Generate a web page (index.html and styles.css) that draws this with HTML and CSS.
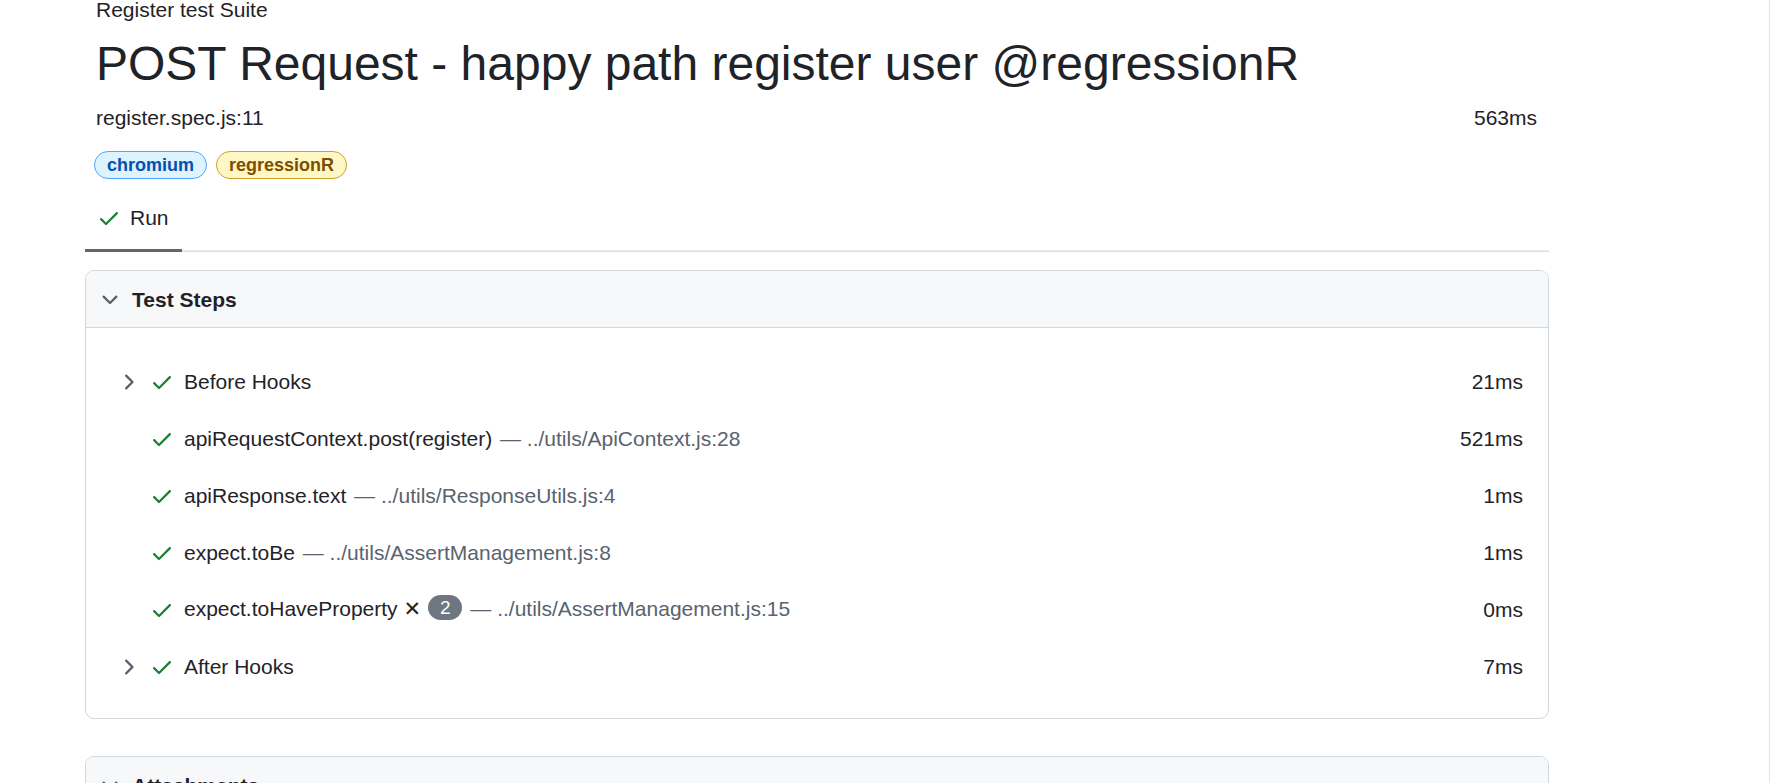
FILE: index.html
```html
<!DOCTYPE html>
<html>
<head>
<meta charset="utf-8">
<title>Test</title>
<link rel="stylesheet" href="styles.css">
</head>
<body>
<div class="page">
  <div class="test-case">
    <div class="suite">Register test Suite</div>
    <h1 class="title">POST Request - happy path register user @regressionR</h1>
    <div class="loc-row"><span>register.spec.js:11</span><span>563ms</span></div>
    <div class="labels">
      <span class="label blue">chromium</span>
      <span class="label yellow">regressionR</span>
    </div>
    <div class="tabs">
      <div class="tab selected">
        <svg class="icon ok" viewBox="0 0 16 16"><path d="M13.78 4.22a.75.75 0 0 1 0 1.06l-7.25 7.25a.75.75 0 0 1-1.06 0L2.22 9.28a.751.751 0 0 1 .018-1.042.751.751 0 0 1 1.042-.018L6 10.94l6.72-6.72a.75.75 0 0 1 1.060 0Z"/></svg>
        <span>Run</span>
      </div>
    </div>

    <section class="box">
      <div class="box-header">
        <svg class="icon chev" viewBox="0 0 16 16"><path d="M12.78 5.22a.749.749 0 0 1 0 1.06l-4.25 4.25a.749.749 0 0 1-1.06 0L3.22 6.28a.749.749 0 1 1 1.06-1.06L8 8.94l3.72-3.72a.749.749 0 0 1 1.06 0Z"/></svg>
        <span>Test Steps</span>
      </div>
      <div class="box-body">
        <div class="step">
          <svg class="icon chev" viewBox="0 0 16 16"><path d="M6.22 3.22a.75.75 0 0 1 1.06 0l4.25 4.25a.75.75 0 0 1 0 1.06l-4.25 4.25a.751.751 0 0 1-1.042-.018.751.751 0 0 1-.018-1.042L9.94 8 6.22 4.280a.75.75 0 0 1 0-1.06Z"/></svg>
          <svg class="icon ok" viewBox="0 0 16 16"><path d="M13.78 4.22a.75.75 0 0 1 0 1.06l-7.25 7.25a.75.75 0 0 1-1.06 0L2.22 9.28a.751.751 0 0 1 .018-1.042.751.751 0 0 1 1.042-.018L6 10.94l6.72-6.72a.75.75 0 0 1 1.06 0Z"/></svg>
          <span class="step-title">Before Hooks</span>
          <span class="dur">21ms</span>
        </div>
        <div class="step">
          <span class="icon-space"></span>
          <svg class="icon ok" viewBox="0 0 16 16"><path d="M13.78 4.22a.75.75 0 0 1 0 1.06l-7.25 7.25a.75.75 0 0 1-1.06 0L2.22 9.28a.751.751 0 0 1 .018-1.042.751.751 0 0 1 1.042-.018L6 10.94l6.72-6.72a.75.75 0 0 1 1.06 0Z"/></svg>
          <span class="step-title">apiRequestContext.post(register) <span class="path">— ../utils/ApiContext.js:28</span></span>
          <span class="dur">521ms</span>
        </div>
        <div class="step">
          <span class="icon-space"></span>
          <svg class="icon ok" viewBox="0 0 16 16"><path d="M13.78 4.22a.75.75 0 0 1 0 1.06l-7.25 7.25a.75.75 0 0 1-1.06 0L2.22 9.28a.751.751 0 0 1 .018-1.042.751.751 0 0 1 1.042-.018L6 10.94l6.72-6.72a.75.75 0 0 1 1.06 0Z"/></svg>
          <span class="step-title">apiResponse.text <span class="path">— ../utils/ResponseUtils.js:4</span></span>
          <span class="dur">1ms</span>
        </div>
        <div class="step">
          <span class="icon-space"></span>
          <svg class="icon ok" viewBox="0 0 16 16"><path d="M13.78 4.22a.75.75 0 0 1 0 1.06l-7.25 7.25a.75.75 0 0 1-1.06 0L2.22 9.28a.751.751 0 0 1 .018-1.042.751.751 0 0 1 1.042-.018L6 10.94l6.72-6.72a.75.75 0 0 1 1.06 0Z"/></svg>
          <span class="step-title">expect.toBe <span class="path">— ../utils/AssertManagement.js:8</span></span>
          <span class="dur">1ms</span>
        </div>
        <div class="step">
          <span class="icon-space"></span>
          <svg class="icon ok" viewBox="0 0 16 16"><path d="M13.78 4.22a.75.75 0 0 1 0 1.06l-7.25 7.25a.75.75 0 0 1-1.06 0L2.22 9.28a.751.751 0 0 1 .018-1.042.751.751 0 0 1 1.042-.018L6 10.94l6.72-6.72a.75.75 0 0 1 1.06 0Z"/></svg>
          <span class="step-title">expect.toHaveProperty <span class="times">✕</span> <span class="counter">2</span> <span class="path">— ../utils/AssertManagement.js:15</span></span>
          <span class="dur">0ms</span>
        </div>
        <div class="step">
          <svg class="icon chev" viewBox="0 0 16 16"><path d="M6.22 3.22a.75.75 0 0 1 1.06 0l4.25 4.25a.75.75 0 0 1 0 1.06l-4.25 4.25a.751.751 0 0 1-1.042-.018.751.751 0 0 1-.018-1.042L9.94 8 6.22 4.28a.75.75 0 0 1 0-1.06Z"/></svg>
          <svg class="icon ok" viewBox="0 0 16 16"><path d="M13.78 4.22a.75.75 0 0 1 0 1.06l-7.25 7.25a.75.75 0 0 1-1.06 0L2.22 9.28a.751.751 0 0 1 .018-1.042.751.751 0 0 1 1.042-.018L6 10.94l6.72-6.72a.75.75 0 0 1 1.06 0Z"/></svg>
          <span class="step-title">After Hooks</span>
          <span class="dur">7ms</span>
        </div>
      </div>
    </section>

    <section class="box attachments">
      <div class="box-header">
        <svg class="icon chev" viewBox="0 0 16 16"><path d="M12.78 5.22a.749.749 0 0 1 0 1.06l-4.25 4.25a.749.749 0 0 1-1.06 0L3.22 6.28a.749.749 0 1 1 1.06-1.06L8 8.94l3.72-3.72a.749.749 0 0 1 1.06 0Z"/></svg>
        <span>Attachments</span>
      </div>
      <div class="box-body"></div>
    </section>
  </div>
</div>
</body>
</html>
```

FILE: styles.css
```css
* { box-sizing: border-box; }

html {
  background: #ffffff;
  border-right: 1px solid #e3e3e3;
}

body {
  margin: 0;
  height: 783px;
  overflow: hidden;
  font-family: "Liberation Sans", Arial, sans-serif;
  color: #1f2328;
}

.page {
  padding-left: 85px;
}

.test-case {
  width: 1464px;
}

.suite {
  font-size: 21px;
  line-height: 24px;
  margin-top: -2.5px;
  padding: 0 11px;
}

.title {
  margin: 0;
  padding: 12px 11px 0;
  font-size: 48px;
  line-height: 60px;
  font-weight: 400;
}

.loc-row {
  display: flex;
  justify-content: space-between;
  padding: 12px 12px 0 11px;
  font-size: 21px;
  line-height: 24px;
}

.labels {
  display: flex;
  gap: 9px;
  padding: 21.5px 0 0 9px;
  margin-bottom: 1px;
}

.label {
  font-size: 18px;
  font-weight: 700;
  line-height: 26px;
  padding: 0 12px;
  border: 1px solid;
  border-radius: 14px;
}

.label.blue {
  background: #ddf4ff;
  border-color: #4fa6ff;
  color: #0550ae;
}

.label.yellow {
  background: #fff8c5;
  border-color: #cfa12c;
  color: #7d4e00;
}

.tabs {
  height: 72px;
  display: flex;
  box-shadow: inset 0 -1.5px 0 #d8dee4;
}

.tab {
  display: flex;
  align-items: center;
  gap: 9px;
  padding: 6px 13px 0 12px;
  border-bottom: 3px solid transparent;
  font-size: 21px;
}

.tab.selected {
  border-bottom-color: #666666;
}

.icon {
  width: 24px;
  height: 24px;
  flex: none;
}

.icon.ok { fill: #1a7f37; }
.icon.chev { fill: #57606a; }

.icon-space {
  width: 24px;
  height: 24px;
  flex: none;
}

.box {
  margin-top: 18px;
  border: 1px solid #d0d7de;
  border-radius: 9px;
  overflow: hidden;
}

.box.attachments {
  margin-top: 37px;
}

.box-header {
  height: 57px;
  display: flex;
  align-items: center;
  gap: 10.5px;
  padding: 1px 0 0 11.5px;
  background: #f6f8fa;
  border-bottom: 1px solid #d0d7de;
  font-size: 21px;
  font-weight: 700;
}

.box-body {
  padding: 25px 0 23px;
}

.step {
  height: 57px;
  display: flex;
  align-items: center;
  padding: 0 25px 0 29.5px;
  font-size: 21px;
}

.step .chev,
.step .icon-space {
  margin-right: 10.5px;
}

.step .ok {
  margin-right: 10px;
}

.step-title {
  flex: 1;
  white-space: nowrap;
}

.path {
  color: #59636e;
  margin-left: 2px;
}

.times {
  font-family: "DejaVu Sans", sans-serif;
  font-size: 21px;
}

.counter {
  display: inline-block;
  vertical-align: middle;
  background: #6e7781;
  color: #ffffff;
  font-size: 19px;
  line-height: 25px;
  padding: 0 12px;
  border-radius: 13px;
  margin-left: 1px;
  position: relative;
  top: -2px;
}

.dur {
  flex: none;
}
```
